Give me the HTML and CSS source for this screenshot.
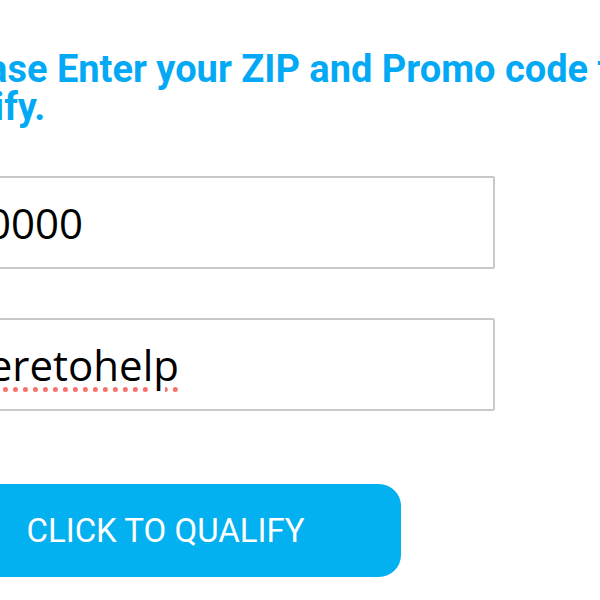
FILE: index.html
```html
<!DOCTYPE html>
<html lang="en">
<head>
    <meta charset="UTF-8">
    <meta name="viewport" content="width=device-width, initial-scale=1.0">
    <title>Qualify</title>
    <link rel="stylesheet" href="styles.css">
</head>
<body>
    <div class="panel">
        <h1 class="title">Please Enter your ZIP and Promo code to qualify.</h1>
        <form class="form" onsubmit="return false">
            <input type="text" class="field" name="zip" value="90000">
            <input type="text" class="field field-misspelled" name="promo" value="heretohelp">
            <button type="submit" class="button">CLICK TO QUALIFY</button>
        </form>
    </div>
</body>
</html>
```

FILE: styles.css
```css
body {
    margin: 0;
    font-family: Roboto, "Liberation Sans", sans-serif;
    background-color: #fff;
    color: #000;
    overflow: hidden;
}
.panel {
    margin-left: -70px;
    padding-top: 50px;
    width: 800px;
}
.title {
    margin: 0 0 50px -9px;
    width: 740px;
    text-indent: 11px;
    font-size: 38px;
    line-height: 38px;
    font-weight: 700;
    color: #03a9f4;
}
.form {
    display: flex;
    flex-direction: column;
    align-items: flex-start;
}
.field {
    box-sizing: border-box;
    width: 565px;
    height: 93px;
    margin-bottom: 49px;
    padding: 0 0 0 31px;
    border: 2px solid #c8c8c8;
    border-radius: 2px;
    font-family: "Open Sans", Roboto, sans-serif;
    font-size: 42px;
    color: #000;
    background: #fff;
    outline: none;
}
.field-misspelled {
    margin-bottom: 73px;
    text-decoration: underline dotted #f8716b 5px;
    text-underline-offset: 6px;
}
.button {
    width: 471px;
    height: 93px;
    border: none;
    border-radius: 22px;
    background-color: #03b0f0;
    color: #fff;
    font-family: Roboto, sans-serif;
    font-size: 33px;
    text-align: center;
    cursor: pointer;
}
```
